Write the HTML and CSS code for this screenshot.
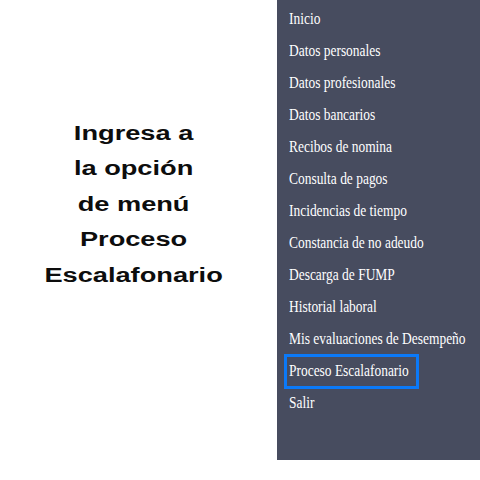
FILE: index.html
```html
<!DOCTYPE html>
<html lang="es">
<head>
<meta charset="utf-8">
<title>Proceso Escalafonario</title>
<link rel="stylesheet" href="styles.css">
</head>
<body>
<div class="page">
  <div class="intro">
    <div class="intro-text">
      <div class="line">Ingresa a</div>
      <div class="line">la opción</div>
      <div class="line">de menú</div>
      <div class="line">Proceso</div>
      <div class="line">Escalafonario</div>
    </div>
  </div>
  <nav class="menu">
    <div class="item"><span>Inicio</span></div>
    <div class="item"><span>Datos personales</span></div>
    <div class="item"><span>Datos profesionales</span></div>
    <div class="item"><span>Datos bancarios</span></div>
    <div class="item"><span>Recibos de nomina</span></div>
    <div class="item"><span>Consulta de pagos</span></div>
    <div class="item"><span>Incidencias de tiempo</span></div>
    <div class="item"><span>Constancia de no adeudo</span></div>
    <div class="item"><span>Descarga de FUMP</span></div>
    <div class="item"><span>Historial laboral</span></div>
    <div class="item"><span>Mis evaluaciones de Desempeño</span></div>
    <div class="item active"><span>Proceso Escalafonario</span></div>
    <div class="item"><span>Salir</span></div>
  </nav>
</div>
</body>
</html>
```

FILE: styles.css
```css
html, body {
  margin: 0;
  padding: 0;
  background: #ffffff;
}

.page {
  display: flex;
  width: 480px;
  height: 480px;
  align-items: flex-start;
}

.intro {
  width: 277px;
  flex: none;
  display: flex;
  justify-content: center;
  padding-top: 116px;
  padding-right: 10px;
  box-sizing: border-box;
}

.intro-text {
  font-family: "Liberation Sans", Arial, sans-serif;
  font-weight: bold;
  font-size: 20px;
  line-height: 35.4px;
  color: #0d0d0d;
  text-align: center;
  transform: scaleX(1.36);
}

.menu {
  width: 203px;
  height: 460px;
  flex: none;
  background: #474c5f;
  box-sizing: border-box;
  padding-top: 3px;
  padding-left: 12px;
}

.item {
  height: 32px;
  line-height: 32px;
  font-family: "Liberation Serif", "Times New Roman", serif;
  font-size: 16px;
  color: #ffffff;
  white-space: nowrap;
  position: relative;
}

.item span {
  display: inline-block;
  transform: scaleX(0.84);
  transform-origin: left center;
}

.item.active::after {
  content: "";
  position: absolute;
  left: -5px;
  top: -1px;
  width: 135px;
  height: 35px;
  border: 3px solid #0b79f7;
  box-sizing: border-box;
}
```
